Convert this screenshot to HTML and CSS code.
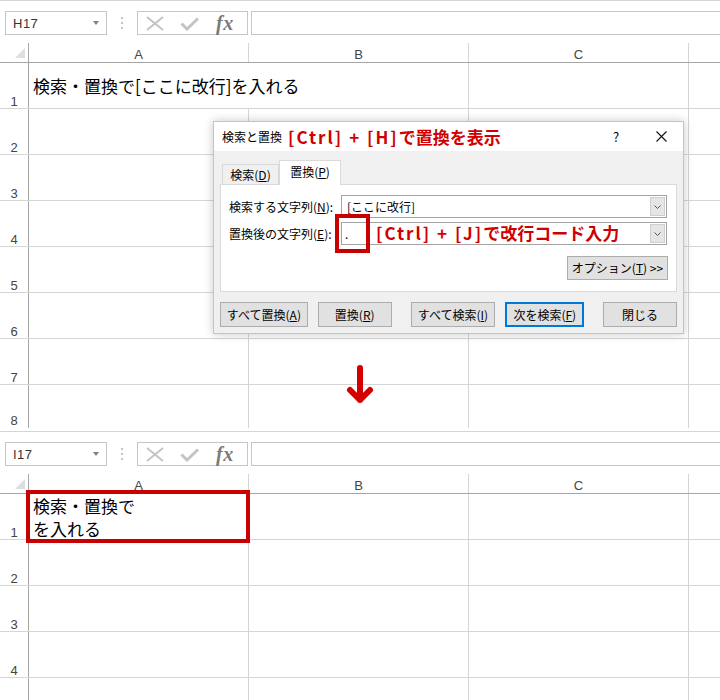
FILE: index.html
```html
<!DOCTYPE html>
<html lang="ja">
<head>
<meta charset="utf-8">
<title>検索と置換</title>
<link rel="stylesheet" href="styles.css">
</head>
<body>
<div class="page">
  <section class="sheet sheet-top">
    <div class="fbar">
      <div class="namebox"><span>H17</span><span class="nb-arrow"></span></div>
      <div class="fdots"><i></i><i></i><i></i></div>
      <div class="fbtns">
        <svg class="ic-x" width="18" height="15" viewBox="0 0 18 15"><path d="M1 1L17 14M17 1L1 14" stroke="#c4c4c4" stroke-width="2" fill="none"/></svg>
        <svg class="ic-check" width="19" height="14" viewBox="0 0 19 14"><path d="M1.5 6.5L7 12L18 1.5" stroke="#c4c4c4" stroke-width="3" fill="none"/></svg>
        <span class="fx">fx</span>
      </div>
      <div class="finput"></div>
    </div>
    <div class="grid">
      <div class="row hdr">
        <div class="rh corner"><svg width="10" height="10" viewBox="0 0 10 10"><path d="M10 0V10H0Z" fill="#dedede"/></svg></div>
        <div class="c">A</div><div class="c">B</div><div class="c">C</div><div class="c last"></div>
      </div>
      <div class="row">
        <div class="rh">1</div>
        <div class="c text no-rb"><span class="val">検索・置換で[ここに改行]を入れる</span></div>
        <div class="c"></div><div class="c"></div><div class="c last"></div>
      </div>
      <div class="row"><div class="rh">2</div><div class="c"></div><div class="c"></div><div class="c"></div><div class="c last"></div></div>
      <div class="row"><div class="rh">3</div><div class="c"></div><div class="c"></div><div class="c"></div><div class="c last"></div></div>
      <div class="row"><div class="rh">4</div><div class="c"></div><div class="c"></div><div class="c"></div><div class="c last"></div></div>
      <div class="row"><div class="rh">5</div><div class="c"></div><div class="c"></div><div class="c"></div><div class="c last"></div></div>
      <div class="row"><div class="rh">6</div><div class="c"></div><div class="c"></div><div class="c"></div><div class="c last"></div></div>
      <div class="row"><div class="rh">7</div><div class="c"></div><div class="c"></div><div class="c"></div><div class="c last"></div></div>
      <div class="row row-cut"><div class="rh">8</div><div class="c"></div><div class="c"></div><div class="c"></div><div class="c last"></div></div>
    </div>
  </section>

  <section class="sheet sheet-bottom">
    <div class="fbar">
      <div class="namebox"><span>I17</span><span class="nb-arrow"></span></div>
      <div class="fdots"><i></i><i></i><i></i></div>
      <div class="fbtns">
        <svg class="ic-x" width="18" height="15" viewBox="0 0 18 15"><path d="M1 1L17 14M17 1L1 14" stroke="#c4c4c4" stroke-width="2" fill="none"/></svg>
        <svg class="ic-check" width="19" height="14" viewBox="0 0 19 14"><path d="M1.5 6.5L7 12L18 1.5" stroke="#c4c4c4" stroke-width="3" fill="none"/></svg>
        <span class="fx">fx</span>
      </div>
      <div class="finput"></div>
    </div>
    <div class="grid">
      <div class="row hdr">
        <div class="rh corner"><svg width="10" height="10" viewBox="0 0 10 10"><path d="M10 0V10H0Z" fill="#dedede"/></svg></div>
        <div class="c">A</div><div class="c">B</div><div class="c">C</div><div class="c last"></div>
      </div>
      <div class="row">
        <div class="rh">1</div>
        <div class="c text"><span class="val">検索・置換で<br>を入れる</span></div>
        <div class="c"></div><div class="c"></div><div class="c last"></div>
      </div>
      <div class="row"><div class="rh">2</div><div class="c"></div><div class="c"></div><div class="c"></div><div class="c last"></div></div>
      <div class="row"><div class="rh">3</div><div class="c"></div><div class="c"></div><div class="c"></div><div class="c last"></div></div>
      <div class="row"><div class="rh">4</div><div class="c"></div><div class="c"></div><div class="c"></div><div class="c last"></div></div>
      <div class="row"><div class="rh"></div><div class="c"></div><div class="c"></div><div class="c"></div><div class="c last"></div></div>
    </div>
  </section>

  <div class="dialog">
    <div class="dlg-title">
      <span class="dlg-name">検索と置換</span>
      <span class="note note-title"><span class="note-lat">[Ctrl] + [H]</span>で置換を表示</span>
      <span class="tb-help">?</span>
      <svg class="tb-close" width="11" height="11" viewBox="0 0 11 11"><path d="M0.5 0.5L10.5 10.5M10.5 0.5L0.5 10.5" stroke="#111" stroke-width="1.1" fill="none"/></svg>
    </div>
    <div class="dlg-body">
      <div class="tabs">
        <div class="tab">検索(<u>D</u>)</div>
        <div class="tab tab-on">置換(<u>P</u>)</div>
      </div>
      <div class="panel">
        <div class="frow">
          <span class="flabel">検索する文字列(<u>N</u>):</span>
          <div class="combo"><span class="cb-text">[ここに改行]</span><span class="cb-drop"><svg width="7" height="4" viewBox="0 0 7 4"><path d="M0.5 0.5L3.5 3.5L6.5 0.5" stroke="#555" stroke-width="1" fill="none"/></svg></span></div>
        </div>
        <div class="frow frow2">
          <span class="flabel">置換後の文字列(<u>E</u>):</span>
          <div class="combo"><span class="cb-text cb-caret">.</span><span class="cb-drop"><svg width="7" height="4" viewBox="0 0 7 4"><path d="M0.5 0.5L3.5 3.5L6.5 0.5" stroke="#555" stroke-width="1" fill="none"/></svg></span></div>
        </div>
        <div class="opt-row"><div class="btn btn-opt">オプション(<u>T</u>) &gt;&gt;</div></div>
      </div>
      <div class="btn-row">
        <div class="btn b-all-rep">すべて置換(<u>A</u>)</div>
        <div class="btn b-rep">置換(<u>R</u>)</div>
        <div class="btn b-all-find">すべて検索(<u>I</u>)</div>
        <div class="btn b-next">次を検索(<u>F</u>)</div>
        <div class="btn b-close">閉じる</div>
      </div>
    </div>
    <div class="redbox rb-input"></div>
    <div class="note note-input"><span class="note-lat">[Ctrl] + [J]</span>で改行コード入力</div>
  </div>

  <svg class="arrow" width="30" height="48" viewBox="0 0 30 48"><path d="M15 8V40M5 30L15 40L25 30" stroke="#d40000" stroke-width="6" stroke-linecap="round" stroke-linejoin="round" fill="none"/></svg>
  <div class="redbox rb-cell"></div>
</div>
</body>
</html>
```

FILE: styles.css
```css
* { box-sizing: border-box; }
html, body { margin: 0; padding: 0; }
body {
  width: 720px;
  height: 700px;
  overflow: hidden;
  background: #fff;
  color: #000;
  font-family: "Noto Sans CJK JP", "Noto Sans", sans-serif;
}
.page { position: relative; width: 720px; height: 700px; }

/* sheet */
.sheet { border-top: 1px solid #d5d5d5; overflow: hidden; }
.sheet-top { height: 428px; }
.sheet-bottom { height: 269px; margin-top: 3px; }

.fbar { display: flex; height: 24px; margin-top: 10px; margin-bottom: 8px; }
.namebox {
  width: 102px;
  margin-left: 5px;
  border: 1px solid #c6c6c6;
  display: flex;
  align-items: center;
  padding: 0 7px 0 7px;
  font-family: "Liberation Sans", sans-serif;
  font-size: 13px;
  letter-spacing: 0.5px;
  color: #333;
}
.nb-arrow {
  margin-left: auto;
  width: 0;
  height: 0;
  border-left: 3.5px solid transparent;
  border-right: 3.5px solid transparent;
  border-top: 4px solid #808080;
}
.fdots { width: 30px; display: flex; flex-direction: column; align-items: center; justify-content: center; gap: 3px; }
.fdots i { display: block; width: 2px; height: 2px; background: #c4c4c4; }
.fbtns {
  width: 111px;
  border: 1px solid #c6c6c6;
  display: flex;
  align-items: center;
  padding-left: 8px;
}
.ic-x { display: block; }
.ic-check { display: block; margin-left: 16px; margin-top: 2px; }
.fx {
  margin-left: 17px;
  font-family: "Liberation Serif", serif;
  font-style: italic;
  font-weight: bold;
  font-size: 20px;
  line-height: 20px;
  color: #7a7a7a;
  letter-spacing: 0.5px;
}
.finput { flex: 1; margin-left: 3px; margin-right: -5px; border: 1px solid #c6c6c6; }

/* grid */
.row { display: flex; height: 46px; border-bottom: 1px solid #d5d5d5; }
.row.hdr { height: 20px; border-bottom: 1px solid #a6a6a6; }
.rh {
  width: 29px;
  flex: none;
  border-right: 1px solid #a6a6a6;
  display: flex;
  align-items: flex-end;
  justify-content: center;
  padding-bottom: 0;
  font-family: "Liberation Sans", sans-serif;
  font-size: 13px;
  line-height: 12px;
  color: #444;
}
.row-cut .rh { padding-bottom: 3px; }
.rh.corner { justify-content: flex-end; padding: 0 3px 4px 0; }
.rh.corner svg { display: block; }
.c { width: 220px; flex: none; border-right: 1px solid #d5d5d5; }
.c.last { flex: 1; border-right: none; }
.hdr .c {
  text-align: center;
  font-family: "Liberation Sans", sans-serif;
  font-size: 13px;
  line-height: 19px;
  padding-top: 2px;
  color: #444;
}
.c.text {
  display: flex;
  align-items: center;
  padding-left: 4px;
  font-size: 17px;
  line-height: 23px;
  white-space: nowrap;
}
.c.no-rb { border-right-color: transparent; }
.val { display: block; }

/* dialog */
.dialog {
  position: absolute;
  left: 213px;
  top: 121px;
  width: 471px;
  height: 213px;
  background: #f0f0f0;
  border: 1px solid #c4c4c4;
  box-shadow: 0 0 9px rgba(0, 0, 0, 0.22);
}
.dlg-title {
  height: 29px;
  background: #fff;
  display: flex;
  align-items: center;
  padding-left: 8px;
}
.dlg-name { font-size: 12px; }
.note {
  color: #d00000;
  font-weight: bold;
  font-size: 17px;
  line-height: 20px;
  white-space: nowrap;
}
.note-lat { letter-spacing: 2px; }
.note-title { margin-left: 6px; }
.tb-help { margin-left: auto; width: 16px; text-align: center; font-size: 13px; margin-right: 32px; }
.tb-close { display: block; margin-right: 16px; }

.dlg-body { padding: 0 6px 7px 6px; }
.tabs { height: 34px; display: flex; align-items: flex-end; padding-left: 2px; }
.tab {
  height: 21px;
  width: 57px;
  border: 1px solid #d9d9d9;
  border-bottom: none;
  font-size: 12px;
  line-height: 19px;
  text-align: center;
  background: #f0f0f0;
}
.tab-on {
  position: relative;
  z-index: 2;
  width: 62px;
  height: 25px;
  background: #fff;
  line-height: 21px;
}
.panel {
  position: relative;
  z-index: 1;
  margin-top: -1px;
  height: 108px;
  background: #fff;
  border: 1px solid #d9d9d9;
  padding: 10px 9px 0 8px;
}
.frow { display: flex; align-items: center; height: 23px; }
.frow2 { margin-top: 4px; }
.flabel { width: 112px; flex: none; font-size: 12px; white-space: nowrap; }
.combo {
  flex: 1;
  height: 23px;
  border: 1px solid #a3a3a3;
  display: flex;
  align-items: stretch;
}
.cb-text { flex: 1; font-size: 12px; line-height: 21px; padding-left: 5px; }
.cb-caret { line-height: 22px; padding-left: 3px; }
.cb-drop {
  width: 15px;
  margin: 1px;
  background: #e5e5e5;
  border: 1px solid #cfcfcf;
  display: flex;
  align-items: center;
  justify-content: center;
}
.cb-drop svg { display: block; }
.opt-row { display: flex; justify-content: flex-end; margin-top: 11px; margin-right: -1px; }

.btn {
  height: 25px;
  background: #e1e1e1;
  border: 1px solid #adadad;
  font-size: 12px;
  line-height: 23px;
  text-align: center;
  white-space: nowrap;
}
.btn-opt { width: 101px; height: 24px; line-height: 22px; }
.btn-row { display: flex; margin-top: 10px; }
.b-all-rep { width: 88px; }
.b-rep { width: 74px; margin-left: 10px; }
.b-all-find { width: 85px; margin-left: 19px; }
.b-next { width: 79px; margin-left: 10px; border: 2px solid #0078d7; line-height: 21px; }
.b-close { width: 74px; margin-left: 19px; }

.redbox { position: absolute; z-index: 5; border: 4px solid #c80000; }
.rb-input { left: 121px; top: 92px; width: 35px; height: 39px; }
.note-input { position: absolute; z-index: 5; left: 162px; top: 101px; }
.rb-cell { left: 26px; top: 490px; width: 224px; height: 53px; }

.arrow { position: absolute; left: 345px; top: 360px; display: block; }
```
